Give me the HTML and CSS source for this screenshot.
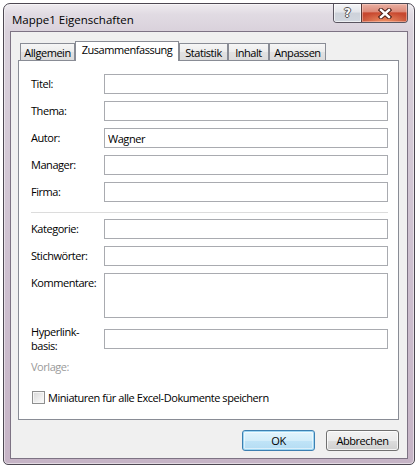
FILE: index.html
```html
<!DOCTYPE html>
<html lang="de">
<head>
<meta charset="utf-8">
<title>Mappe1 Eigenschaften</title>
<link rel="stylesheet" href="styles.css">
</head>
<body>
<div class="window">
  <div class="titlebar">
    <span class="title">Mappe1 Eigenschaften</span>
    <div class="caption">
      <div class="cb help"><span class="q">?</span></div>
      <div class="cb close">
        <svg width="14" height="11" viewBox="0 0 14 11">
          <path d="M3 2 L11 9 M11 2 L3 9" stroke="#4a1d16" stroke-width="4.4" stroke-linecap="square" fill="none"/>
          <path d="M3 2 L11 9 M11 2 L3 9" stroke="#ffffff" stroke-width="2.4" stroke-linecap="square" fill="none"/>
        </svg>
      </div>
    </div>
  </div>
  <div class="client">
    <div class="tabs">
      <div class="tab t1">Allgemein</div>
      <div class="tab sel t2">Zusammenfassung</div>
      <div class="tab t3">Statistik</div>
      <div class="tab t4">Inhalt</div>
      <div class="tab t5">Anpassen</div>
    </div>
    <div class="panel">
      <div class="row"><span class="lbl">Titel:</span><input class="field" type="text" value=""></div>
      <div class="row"><span class="lbl">Thema:</span><input class="field" type="text" value=""></div>
      <div class="row"><span class="lbl">Autor:</span><input class="field" type="text" value="Wagner"></div>
      <div class="row"><span class="lbl">Manager:</span><input class="field" type="text" value=""></div>
      <div class="row"><span class="lbl">Firma:</span><input class="field" type="text" value=""></div>
      <div class="sep"></div>
      <div class="row"><span class="lbl">Kategorie:</span><input class="field" type="text" value=""></div>
      <div class="row"><span class="lbl">Stichwörter:</span><input class="field" type="text" value=""></div>
      <div class="row"><span class="lbl">Kommentare:</span><textarea class="field area"></textarea></div>
      <div class="row two"><span class="lbl">Hyperlink-<br>basis:</span><input class="field" type="text" value=""></div>
      <div class="vorlage">Vorlage:</div>
      <div class="chkrow"><span class="chk"></span><span>Miniaturen für alle Excel-Dokumente speichern</span></div>
    </div>
    <div class="btnrow">
      <div class="btn ok">OK</div>
      <div class="btn">Abbrechen</div>
    </div>
  </div>
</div>
</body>
</html>
```
FILE: styles.css
```css
* { box-sizing: border-box; }
html, body { margin: 0; }
body {
  width: 416px;
  height: 466px;
  background: #ffffff;
  padding: 3px 0 0 3px;
  font-family: "Open Sans", "Noto Sans", sans-serif;
  font-size: 11px;
  letter-spacing: -0.45px;
  color: #000;
  overflow: hidden;
}
.window {
  width: 412px;
  height: 462px;
  border: 1px solid #4d4852;
  border-radius: 7px 7px 5px 5px;
  background: linear-gradient(180deg, #efecf0 0, #e1dbe3 10px, #d9d1db 28px, #cdbfcf 60%, #c6b4c6 100%);
  box-shadow: inset 0 0 0 1px rgba(255,255,255,0.5);
  display: flex;
  flex-direction: column;
  padding: 0 6px 5px 6px;
}
.titlebar {
  height: 27px;
  display: flex;
  justify-content: space-between;
  align-items: flex-start;
  padding-left: 2px;
}
.title {
  font-size: 11.5px;
  letter-spacing: 0;
  line-height: 16px;
  padding-top: 8px;
  color: #000;
}
.caption {
  display: flex;
  height: 19px;
  border: 1px solid #5a5560;
  border-top: none;
  border-radius: 0 0 4px 4px;
  overflow: hidden;
}
.cb {
  height: 100%;
  display: flex;
  align-items: center;
  justify-content: center;
}
.help {
  width: 27px;
  background: linear-gradient(180deg, #f5f5f7 0, #e3e5ea 45%, #cdd2da 50%, #d2d7df 100%);
  box-shadow: inset 0 0 0 1px rgba(255,255,255,0.6);
}
.q {
  font-family: "DejaVu Sans", sans-serif;
  font-weight: bold;
  font-size: 12px;
  letter-spacing: 0;
  line-height: 12px;
  color: #fbfbfb;
  text-shadow: 1px 0 0 #555, -1px 0 0 #555, 0 1px 0 #555, 0 -1px 0 #555;
}
.close {
  width: 46px;
  border-left: 1px solid #5a3a36;
  background:
    radial-gradient(ellipse 60% 55% at 50% 100%, rgba(255,170,120,0.75), rgba(255,170,120,0) 100%),
    linear-gradient(180deg, #eab0a2 0, #dd8b7a 42%, #c8482f 50%, #c24a32 100%);
  box-shadow: inset 0 0 0 1px rgba(255,220,210,0.45);
}
.client {
  height: 428px;
  border: 1px solid #7d7384;
  background: #f0f0f0;
  padding: 9px 8px 0 7px;
  display: flex;
  flex-direction: column;
}
.tabs {
  display: flex;
  align-items: flex-end;
  height: 19px;
  padding-left: 2px;
}
.tab {
  height: 17px;
  border: 1px solid #898c95;
  border-bottom: none;
  background: linear-gradient(180deg, #f6f6f6 0, #ececec 50%, #e2e2e2 51%, #dcdcdc 100%);
  text-align: center;
  line-height: 17px;
  white-space: nowrap;
}
.tab.sel {
  height: 20px;
  margin-bottom: -1px;
  background: #fff;
  position: relative;
  z-index: 1;
  line-height: 16px;
}
.t1 { width: 55px; }
.t2 { width: 104px; }
.t3 { width: 49px; }
.t4 { width: 41px; }
.t5 { width: 57px; }
.panel {
  height: 360px;
  border: 1px solid #898c95;
  background: #fff;
  padding: 13px 10px 0 12px;
  display: flex;
  flex-direction: column;
}
.row {
  display: flex;
  align-items: flex-start;
  margin-bottom: 7px;
}
.lbl {
  width: 73px;
  flex: none;
  line-height: 20px;
}
.field {
  width: 284px;
  height: 20px;
  margin: 0;
  border: 1px solid #a9abb0;
  background: #fff;
  padding: 0 3px;
  font-family: inherit;
  font-size: 11px;
  letter-spacing: -0.45px;
  color: #000;
  outline: none;
}
.area {
  height: 45px;
  resize: none;
}
.row.two {
  align-items: center;
}
.row.two .lbl {
  line-height: 14px;
}
.sep {
  height: 1px;
  background: #dcdcdc;
  margin: 3px 0 6px 0;
}
.vorlage {
  line-height: 13px;
  color: #9a9a9a;
}
.chkrow {
  display: flex;
  align-items: center;
  height: 13px;
  margin-top: 18px;
  line-height: 13px;
}
.chk {
  width: 13px;
  height: 13px;
  margin: 0 3px 0 1px;
  border: 1px solid #8e8f8f;
  background: linear-gradient(135deg, #d8d8d8 0, #f2f2f2 70%, #fbfbfb 100%);
  box-shadow: inset 0 0 0 1px #f6f6f6;
  flex: none;
}
.btnrow {
  display: flex;
  justify-content: flex-end;
  gap: 11px;
  margin-top: 10px;
}
.btn {
  width: 73px;
  height: 21px;
  border: 1px solid #707070;
  border-radius: 3px;
  background: linear-gradient(180deg, #f2f2f2 0, #ebebeb 50%, #dddddd 51%, #cfcfcf 100%);
  box-shadow: inset 0 0 0 1px rgba(255,255,255,0.75);
  text-align: center;
  line-height: 19px;
}
.btn.ok {
  border-color: #3c7fb1;
  background: linear-gradient(180deg, #e3f4fc 0, #d3edfa 50%, #c0e4f7 51%, #b4dcf3 100%);
  box-shadow: inset 0 0 0 1px #9fd6f2, inset 0 0 0 2px rgba(255,255,255,0.5);
}
```
